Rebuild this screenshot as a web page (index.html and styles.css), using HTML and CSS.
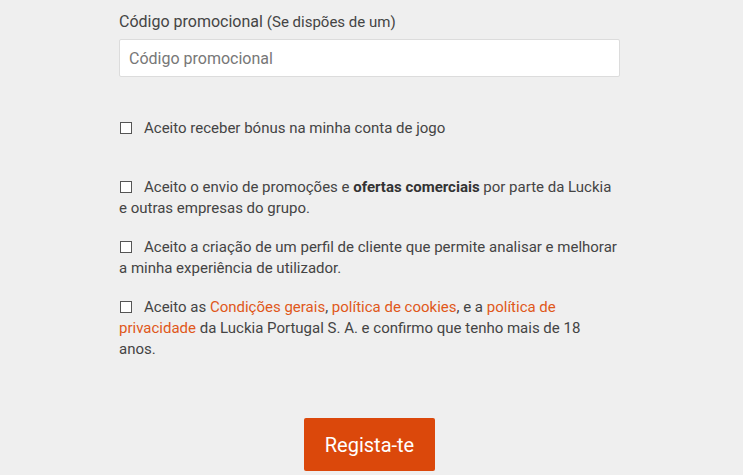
FILE: index.html
```html
<!DOCTYPE html>
<html lang="pt">
<head>
<meta charset="utf-8">
<link rel="stylesheet" href="styles.css">
</head>
<body>
<div class="form">
  <div class="field">
    <label class="field-label" for="promo">Código promocional <span class="hint">(Se dispões de um)</span></label>
    <input class="text-input" id="promo" type="text" placeholder="Código promocional">
  </div>

  <div class="checks">
    <label class="check check-first"><span class="box"></span>Aceito receber bónus na minha conta de jogo</label>
    <label class="check"><span class="box"></span>Aceito o envio de promoções e <b>ofertas comerciais</b> por parte da Luckia e outras empresas do grupo.</label>
    <label class="check"><span class="box"></span>Aceito a criação de um perfil de cliente que permite analisar e melhorar a minha experiência de utilizador.</label>
    <label class="check"><span class="box"></span>Aceito as <a href="#">Condições gerais</a>, <a href="#">política de cookies</a>, e a <a href="#">política de privacidade</a> da Luckia Portugal S. A. e confirmo que tenho mais de 18 anos.</label>
  </div>

  <div class="actions">
    <button class="submit" type="button">Regista-te</button>
  </div>
</div>
</body>
</html>
```

FILE: styles.css
```css
html, body {
  margin: 0;
  padding: 0;
  background: #efefef;
}
body {
  font-family: Roboto, "Liberation Sans", Arial, sans-serif;
  color: #444;
  height: 475px;
  overflow: hidden;
}
.form {
  width: 501px;
  margin-left: 119px;
  padding-top: 11px;
}
.field-label {
  display: block;
  font-size: 16px;
  line-height: 21px;
  color: #444;
  margin-bottom: 6px;
}
.hint {
  font-size: 15px;
}
.text-input {
  display: block;
  box-sizing: border-box;
  width: 100%;
  height: 38px;
  border: 1px solid #dcdcdc;
  border-radius: 2px;
  background: #fff;
  padding: 0 9px;
  font-family: inherit;
  font-size: 16px;
  color: #444;
  outline: none;
}
.text-input::placeholder {
  color: #777;
}
.checks {
  padding-top: 41px;
}
.check {
  display: block;
  font-size: 15px;
  line-height: 21px;
  color: #444;
  margin-bottom: 18px;
}
.check-first {
  margin-bottom: 38px;
}
.box {
  display: inline-block;
  box-sizing: border-box;
  width: 12px;
  height: 12px;
  border: 1px solid #555;
  background: #fff;
  margin: 0 12px 0 1px;
  vertical-align: -1px;
}
.check b {
  font-weight: 700;
  color: #333;
}
.check a {
  color: #e0581a;
  text-decoration: none;
}
.actions {
  display: flex;
  justify-content: center;
  padding-top: 40px;
  margin-left: -119px;
  width: 739px;
}
.submit {
  width: 131px;
  height: 53px;
  border: none;
  border-radius: 2px;
  background: #db480b;
  color: #fff;
  font-family: inherit;
  font-size: 20px;
  cursor: pointer;
}
```
